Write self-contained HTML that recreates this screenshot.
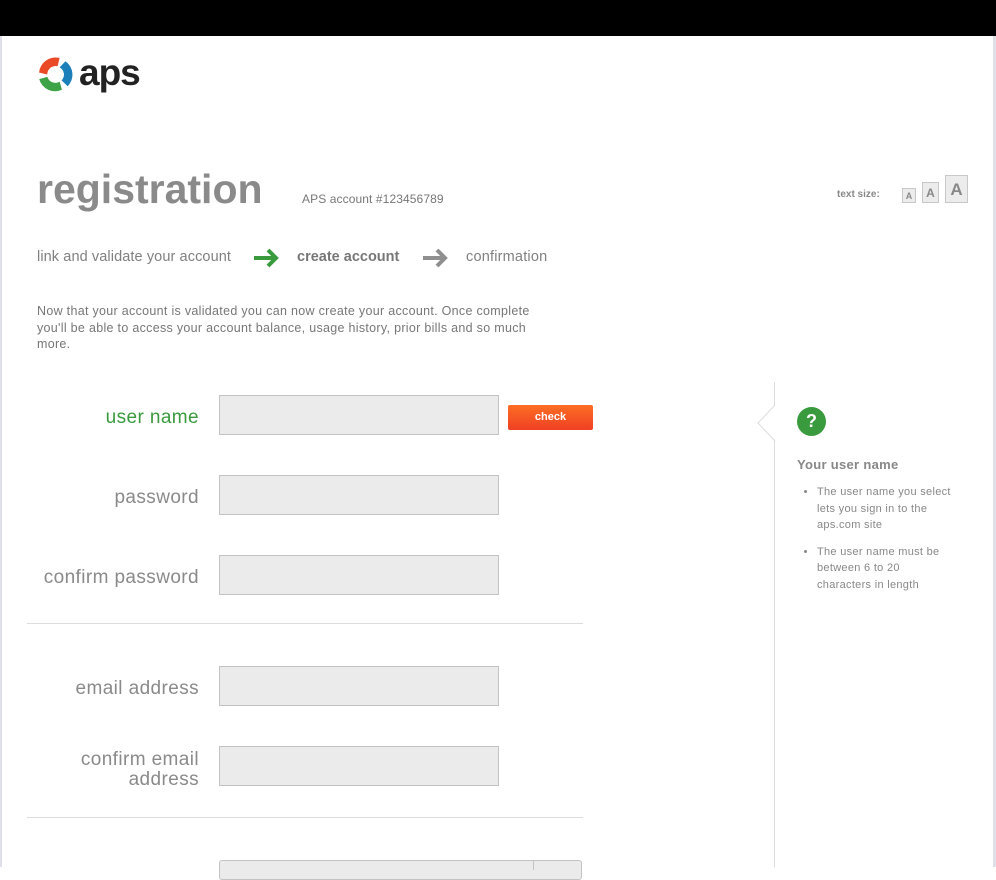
<!DOCTYPE html>
<html><head><meta charset="utf-8"><style>
*{margin:0;padding:0;box-sizing:border-box}
body{width:996px;height:867px;overflow:hidden;background:#fff;font-family:"Liberation Sans",sans-serif;color:#808080;position:relative}
.abs{position:absolute}
.top{left:0;top:0;width:996px;height:36px;background:#000}
.lb{left:0;top:36px;width:2px;height:831px;background:#dfe0ea}
.rb{left:993px;top:36px;width:3px;height:831px;background:#dfe0ea}
.inp{position:absolute;left:219px;width:280px;height:40px;background:#ebebeb;border:1px solid #c3c3c3}
.lbl{position:absolute;right:797px;font-size:19px;letter-spacing:0.4px;color:#8a8a8a;text-align:right;line-height:20px}
.hr{position:absolute;left:27px;width:556px;height:1px;background:#dcdcdc}
.ts{position:absolute;border:1px solid #c8c8c8;background:#ececec;color:#888;font-weight:bold;text-align:center}
li{margin-bottom:10px}
</style></head><body>
<div class="abs top"></div><div class="abs lb"></div><div class="abs rb"></div>
<svg class="abs" style="left:37px;top:56px" width="37" height="37" viewBox="-18 -18 36 36">
<g id="b"><path d="M-16 -2 A16 16 0 0 1 4 -16 L2 -8 A8 8 0 0 0 -8 0 Z" fill="#ea4a26"/></g>
<path d="M-16 -2 A16 16 0 0 1 4 -16 L2 -8 A8 8 0 0 0 -8 0 Z" fill="#1c7fba" transform="rotate(120)"/>
<path d="M-16 -2 A16 16 0 0 1 4 -16 L2 -8 A8 8 0 0 0 -8 0 Z" fill="#3ea347" transform="rotate(240)"/>
</svg>
<div class="abs" style="left:79px;top:52px;font-size:37px;font-weight:bold;color:#222;letter-spacing:-1px">aps</div>
<div class="abs" style="left:37px;top:166px;font-size:41px;font-weight:bold;color:#8a8a8a">registration</div>
<div class="abs" style="left:302px;top:192px;font-size:12px;color:#777;letter-spacing:0.1px">APS account #123456789</div>
<div class="abs" style="left:837px;top:189px;font-size:10px;font-weight:bold;color:#888">text size:</div>
<div class="ts" style="left:902px;top:188px;width:14px;height:15px;font-size:9px;line-height:15px">A</div>
<div class="ts" style="left:922px;top:182px;width:17px;height:21px;font-size:12px;line-height:20px">A</div>
<div class="ts" style="left:945px;top:175px;width:23px;height:28px;font-size:17px;line-height:28px">A</div>
<div class="abs" style="left:37px;top:249px;font-size:14.5px;letter-spacing:0.1px;color:#808080">link and validate your account</div>
<svg class="abs" style="left:252px;top:248px" width="28" height="20" viewBox="0 0 28 20"><path d="M2 10H24M16 2L24 10L16 18" stroke="#3a9a3e" stroke-width="4" fill="none"/></svg>
<div class="abs" style="left:297px;top:249px;font-size:14.5px;font-weight:bold;color:#777">create account</div>
<svg class="abs" style="left:421px;top:248px" width="28" height="20" viewBox="0 0 28 20"><path d="M2 10H24M16 2L24 10L16 18" stroke="#8f8f8f" stroke-width="4" fill="none"/></svg>
<div class="abs" style="left:466px;top:249px;font-size:14.5px;color:#808080;letter-spacing:0.2px">confirmation</div>
<div class="abs" style="left:37px;top:303px;width:520px;font-size:12.5px;letter-spacing:0.3px;line-height:16.5px;color:#777">Now that your account is validated you can now create your account. Once complete you'll be able to access your account balance, usage history, prior bills and so much more.</div>
<div class="lbl" style="top:408px;color:#3a9a3e">user name</div>
<div class="inp" style="top:395px"></div>
<div class="abs" style="left:508px;top:405px;width:85px;height:25px;background:linear-gradient(#fd6e23,#ef4024);border-radius:2px;color:#fff;font-size:11px;font-weight:bold;text-align:center;line-height:24px">check</div>
<div class="lbl" style="top:488px">password</div>
<div class="inp" style="top:475px"></div>
<div class="lbl" style="top:568px">confirm password</div>
<div class="inp" style="top:555px"></div>
<div class="hr" style="top:623px"></div>
<div class="lbl" style="top:679px">email address</div>
<div class="inp" style="top:666px"></div>
<div class="lbl" style="top:750px">confirm email<br>address</div>
<div class="inp" style="top:746px"></div>
<div class="hr" style="top:817px"></div>
<div class="abs" style="left:219px;top:860px;width:363px;height:20px;background:#ebebeb;border:1px solid #c3c3c3;border-radius:3px"></div>
<div class="abs" style="left:533px;top:860px;width:1px;height:10px;background:#c3c3c3"></div>
<div class="abs" style="left:774px;top:382px;width:1px;height:485px;background:#dcdcdc"></div>
<svg class="abs" style="left:757px;top:405px" width="19" height="36" viewBox="0 0 19 36"><path d="M18 0L1 18L18 36" fill="#fff" stroke="#dcdcdc"/></svg>
<div class="abs" style="left:797px;top:407px;width:29px;height:29px;border-radius:50%;background:#3a9a3e;color:#fff;font-weight:bold;font-size:18px;text-align:center;line-height:29px">?</div>
<div class="abs" style="left:797px;top:457px;font-size:13px;font-weight:bold;color:#888;letter-spacing:0.3px">Your user name</div>
<ul class="abs" style="left:817px;top:484px;width:140px;font-size:11px;letter-spacing:0.3px;line-height:16.5px;color:#888">
<li>The user name you select lets you sign in to the aps.com site</li>
<li>The user name must be between 6 to 20 characters in length</li>
</ul>
</body></html>
